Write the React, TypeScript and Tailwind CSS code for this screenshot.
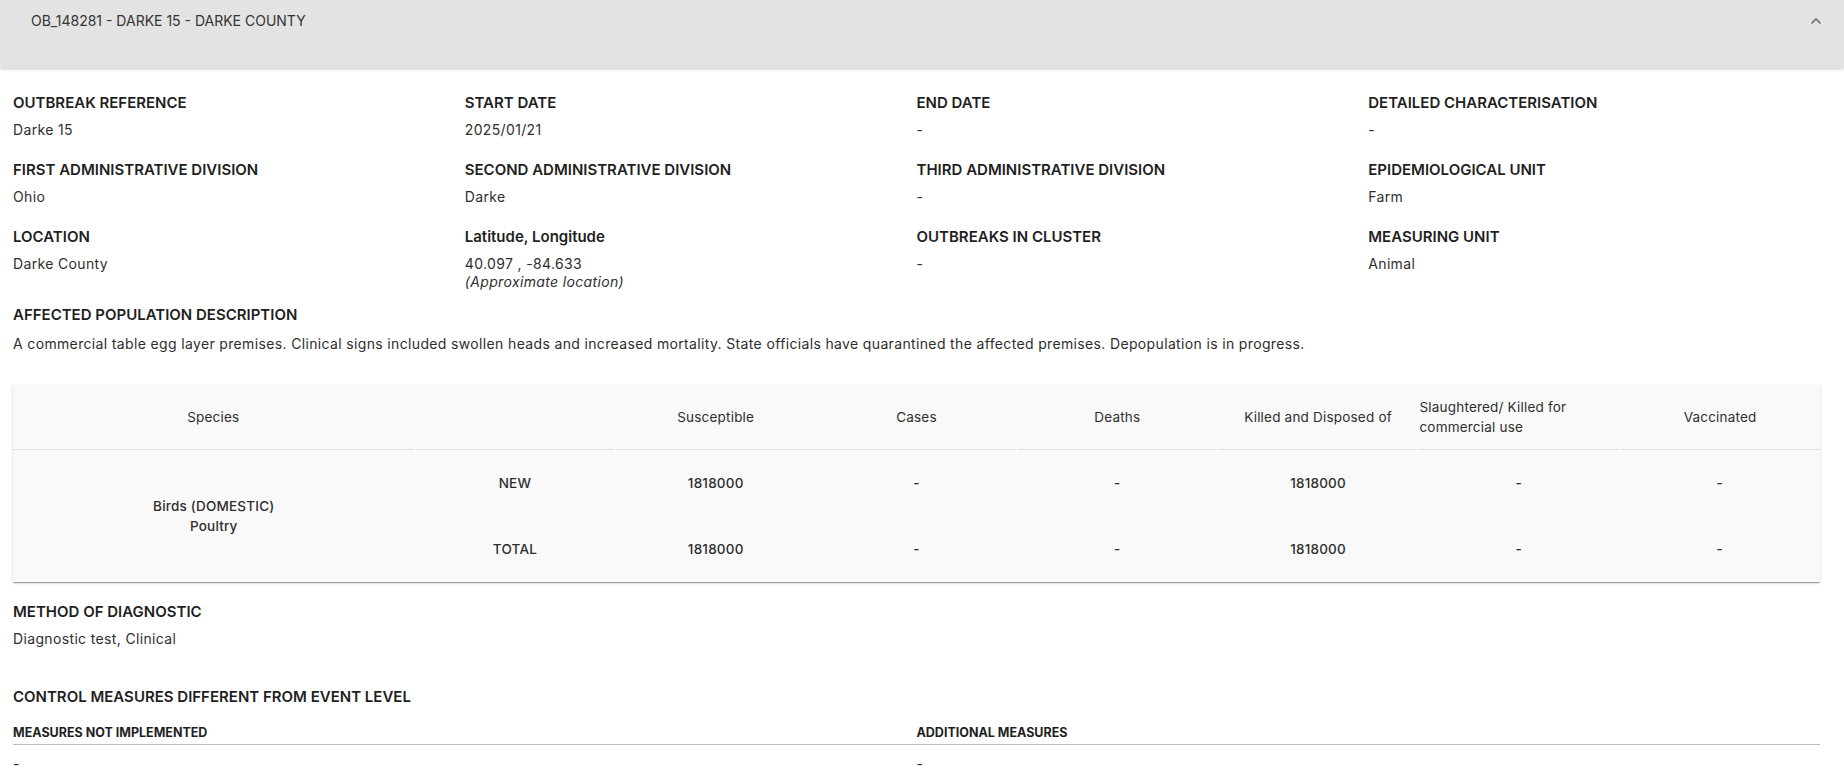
import React from "react";

type Field = { label: string; value: React.ReactNode };

const fields: Field[] = [
  { label: "OUTBREAK REFERENCE", value: "Darke 15" },
  { label: "START DATE", value: "2025/01/21" },
  { label: "END DATE", value: "-" },
  { label: "DETAILED CHARACTERISATION", value: "-" },
  { label: "FIRST ADMINISTRATIVE DIVISION", value: "Ohio" },
  { label: "SECOND ADMINISTRATIVE DIVISION", value: "Darke" },
  { label: "THIRD ADMINISTRATIVE DIVISION", value: "-" },
  { label: "EPIDEMIOLOGICAL UNIT", value: "Farm" },
  { label: "LOCATION", value: "Darke County" },
  {
    label: "Latitude, Longitude",
    value: (
      <>
        <div>40.097 , -84.633</div>
        <div className="italic">(Approximate location)</div>
      </>
    ),
  },
  { label: "OUTBREAKS IN CLUSTER", value: "-" },
  { label: "MEASURING UNIT", value: "Animal" },
];

const headers = ["Susceptible", "Cases", "Deaths", "Killed and Disposed of"];

const rows = [
  { kind: "NEW", values: ["1818000", "-", "-", "1818000", "-", "-"] },
  { kind: "TOTAL", values: ["1818000", "-", "-", "1818000", "-", "-"] },
];

function ChevronUp() {
  return (
    <svg width="12" height="8" viewBox="0 0 12 8" className="mt-[5px]">
      <polyline points="1.5,6.5 6,2 10.5,6.5" fill="none" stroke="#6f6f6f" strokeWidth="1.6" />
    </svg>
  );
}

const labelCls = "text-[15px] font-semibold leading-[20px] text-[#1f1f1f]";
const valueCls = "text-[14px] leading-[18px] tracking-[0.35px] text-[#2e2e2e]";

export default function App() {
  return (
    <div className="min-h-screen bg-white font-['Inter',sans-serif] text-[#2b2b2b]">
      {/* accordion summary */}
      <div className="relative z-10 flex h-[68px] items-start justify-between bg-[#e3e3e3] pl-[31px] pr-[22px] pt-[12px] shadow-[0_1px_3px_rgba(0,0,0,0.22)]">
        <span className="text-[14px] leading-[18px] text-[#333]">OB_148281 - DARKE 15 - DARKE COUNTY</span>
        <ChevronUp />
      </div>

      <div className="pl-[13px] pr-[24px] pt-[25px]">
        {/* outbreak fields */}
        <div className="grid grid-cols-4 gap-y-[21px]">
          {fields.map((f) => (
            <div key={f.label}>
              <div className={labelCls}>{f.label}</div>
              <div className={`mt-[8px] ${valueCls}`}>{f.value}</div>
            </div>
          ))}
        </div>

        <div className={`mt-[14px] ${labelCls}`}>AFFECTED POPULATION DESCRIPTION</div>
        <div className={`mt-[10px] ${valueCls}`}>
          A commercial table egg layer premises. Clinical signs included swollen heads and increased mortality. State
          officials have quarantined the affected premises. Depopulation is in progress.
        </div>

        {/* quantitative data table */}
        <div className="mt-[32px] bg-[#f9f9f9] shadow-[0_2px_1px_-1px_rgba(0,0,0,0.2),0_1px_1px_0_rgba(0,0,0,0.14),0_1px_3px_0_rgba(0,0,0,0.12)]">
          <div className="grid grid-cols-[2fr_1fr_1fr_1fr_1fr_1fr_1fr_1fr] text-[13.5px] leading-[20px] tracking-[0.2px] text-[#2e2e2e]">
            <div className="mr-[1px] flex h-[65px] items-center justify-center border-b border-[#e0e0e0]">Species</div>
            <div className="mx-[1px] h-[65px] border-b border-[#e0e0e0]" />
            {headers.map((h) => (
              <div key={h} className="mx-[1px] flex h-[65px] items-center justify-center border-b border-[#e0e0e0]">
                {h}
              </div>
            ))}
            <div className="mx-[1px] flex h-[65px] items-center border-b border-[#e0e0e0] pr-[30px]">
              Slaughtered/ Killed for commercial use
            </div>
            <div className="ml-[1px] flex h-[65px] items-center justify-center border-b border-[#e0e0e0]">
              Vaccinated
            </div>

            <div className="row-span-2 flex flex-col items-center justify-center font-medium">
              <div>Birds (DOMESTIC)</div>
              <div>Poultry</div>
            </div>
            {rows.map((r) => (
              <React.Fragment key={r.kind}>
                <div className="flex h-[66px] items-center justify-center font-medium">{r.kind}</div>
                {r.values.map((v, i) => (
                  <div key={i} className="flex h-[66px] items-center justify-center font-medium">
                    {v}
                  </div>
                ))}
              </React.Fragment>
            ))}
          </div>
        </div>

        <div className={`mt-[20px] ${labelCls}`}>METHOD OF DIAGNOSTIC</div>
        <div className={`mt-[8px] ${valueCls}`}>Diagnostic test, Clinical</div>

        <div className={`mt-[39px] ${labelCls}`}>CONTROL MEASURES DIFFERENT FROM EVENT LEVEL</div>
        <div className="mt-[18px] grid grid-cols-2">
          {["MEASURES NOT IMPLEMENTED", "ADDITIONAL MEASURES"].map((t) => (
            <div key={t}>
              <div className="border-b border-[#bdbdbd] pb-[3px] text-[12.5px] font-bold leading-[16px] text-[#1f1f1f]">
                {t}
              </div>
              <div className={`mt-[10px] ${valueCls}`}>-</div>
            </div>
          ))}
        </div>
      </div>
    </div>
  );
}
